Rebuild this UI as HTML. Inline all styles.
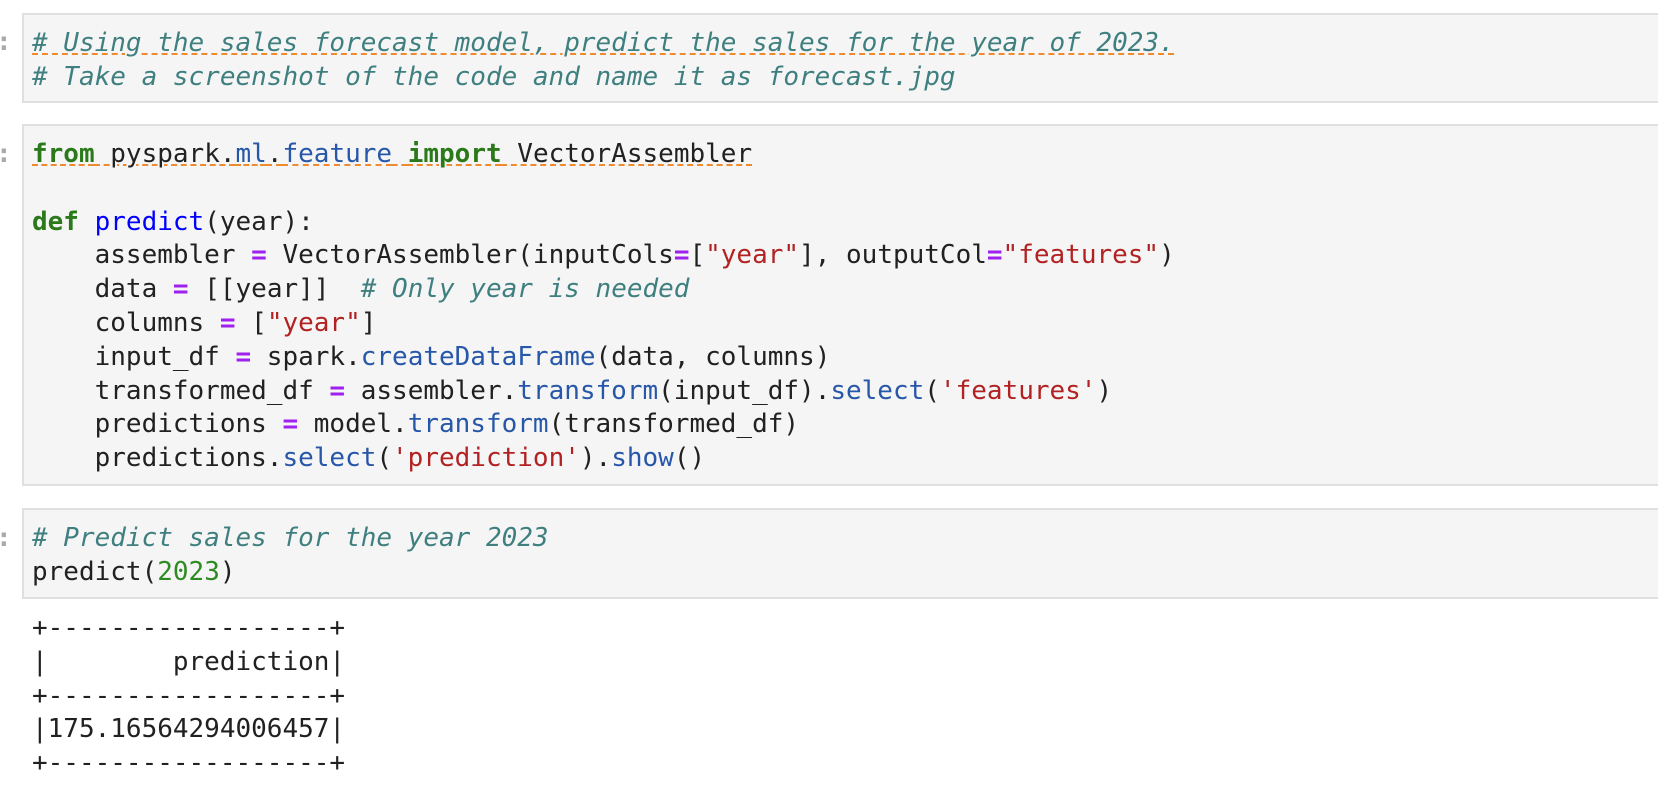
<!DOCTYPE html>
<html><head><meta charset="utf-8"><style>
html,body{margin:0;padding:0;background:#fff;width:1658px;height:806px;overflow:hidden;}
body{position:relative;font-family:"DejaVu Sans Mono","Liberation Mono",monospace;font-size:26px;}
.cell{position:absolute;left:22px;right:-2px;background:#f5f5f5;border:2px solid #e0e0e0;box-sizing:border-box;}
pre{margin:0;padding:0 0 0 8px;font:inherit;line-height:33.8px;white-space:pre;color:#212121;}
.p{position:absolute;left:-4px;color:#aaa;font-size:26px;line-height:33.8px;font-weight:bold;}
.c{color:#3f7f7f;font-style:italic;}
.k{color:#2a7a1a;font-weight:bold;}
.f{color:#0000ff;}
.a{color:#2757a8;}
.s{color:#b22222;}
.o{color:#a020f0;font-weight:bold;}
.n{color:#2e8b22;}
.u{text-decoration:underline dashed #ef8a2e;text-decoration-thickness:2px;text-underline-offset:2px;}
.out{position:absolute;left:24px;top:612px;}
</style></head><body>
<div class="p" style="top:26px">:</div>
<div class="cell" style="top:13px;height:90px;padding-top:12px;">
<pre><span class="c u"># Using the sales forecast model, predict the sales for the year of 2023.</span>
<span class="c"># Take a screenshot of the code and name it as forecast.jpg</span></pre>
</div>
<div class="p" style="top:138px">:</div>
<div class="cell" style="top:124px;height:362px;padding-top:12px;">
<pre><span class="u"><span class="k">from</span> pyspark.<span class="a">ml</span>.<span class="a">feature</span> <span class="k">import</span> VectorAssembler</span>

<span class="k">def</span> <span class="f">predict</span>(year):
    assembler <span class="o">=</span> VectorAssembler(inputCols<span class="o">=</span>[<span class="s">"year"</span>], outputCol<span class="o">=</span><span class="s">"features"</span>)
    data <span class="o">=</span> [[year]]  <span class="c"># Only year is needed</span>
    columns <span class="o">=</span> [<span class="s">"year"</span>]
    input_df <span class="o">=</span> spark.<span class="a">createDataFrame</span>(data, columns)
    transformed_df <span class="o">=</span> assembler.<span class="a">transform</span>(input_df).<span class="a">select</span>(<span class="s">'features'</span>)
    predictions <span class="o">=</span> model.<span class="a">transform</span>(transformed_df)
    predictions.<span class="a">select</span>(<span class="s">'prediction'</span>).<span class="a">show</span>()</pre>
</div>
<div class="p" style="top:522px">:</div>
<div class="cell" style="top:508px;height:91px;padding-top:12px;">
<pre><span class="c"># Predict sales for the year 2023</span>
predict(<span class="n">2023</span>)</pre>
</div>
<div class="out"><pre>+------------------+
|        prediction|
+------------------+
|175.16564294006457|
+------------------+</pre></div>
</body></html>
